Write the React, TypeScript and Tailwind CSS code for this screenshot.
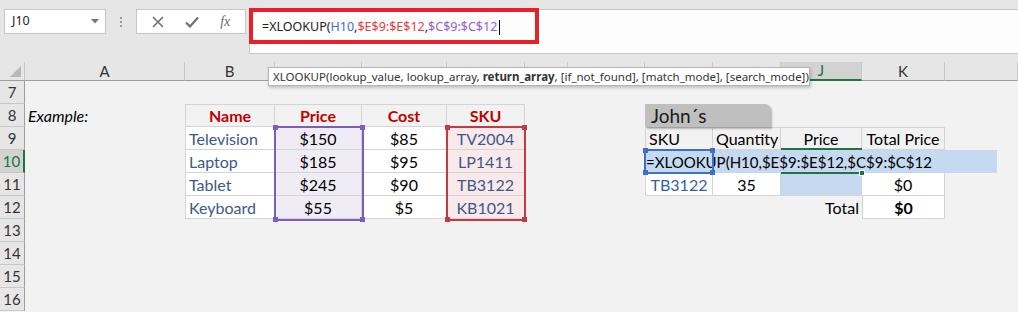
import React from 'react';

const W = [
  'w-[25px]', 'w-[160px]', 'w-[90px]', 'w-[87px]', 'w-[85px]', 'w-[78px]', 'w-[43px]',
  'w-[77px]', 'w-[68px]', 'w-[68px]', 'w-[81px]', 'w-[83px]', 'w-[73px]',
];
// Letters hidden under the tooltip (C..I) and off-screen (L) are not shown in the reference
const LET = ['', 'A', 'B', '', '', '', '', '', '', '', 'J', 'K', ''];

type CellDef = { c?: string; t?: React.ReactNode; raw?: boolean };

function RH({ n, active }: { n: number; active?: boolean }) {
  return (
    <div
      className={`w-[25px] shrink-0 h-[23px] box-border border-b border-b-[#c8c8c8] flex items-center justify-center text-[15px] ${
        active
          ? 'bg-[#d2d2d2] text-[#217346] border-r-2 border-r-[#217346]'
          : 'bg-[#e6e6e6] text-[#333] border-r border-r-[#9e9e9e]'
      }`}
    >
      {n}
    </div>
  );
}

function Row({ n, active, cells = {} }: { n: number; active?: boolean; cells?: Record<number, CellDef> }) {
  const cols = [1, 2, 3, 4, 5, 6, 7, 8, 9, 10, 11, 12];
  return (
    <div className="flex h-[23px]">
      <RH n={n} active={active} />
      {cols.map((i) => {
        const d = cells[i] || {};
        return (
          <div
            key={i}
            className={`${W[i]} relative shrink-0 h-[23px] box-border flex whitespace-nowrap ${
              d.raw ? 'items-start' : 'items-center px-[3px] pt-[1px]'
            } ${d.c || ''}`}
          >
            {d.t}
          </div>
        );
      })}
    </div>
  );
}

const BD = 'border-[#d4d4d4]';
const T = `border-r border-b ${BD}`;
const TL = `border-l border-r border-b ${BD}`;
const TT = `border-t border-r border-b ${BD}`;
const TTL = `border-t border-l border-r border-b ${BD}`;
const HDR = 'justify-center font-bold text-[#c00000]';
const NM = 'text-[#3b5a8a]';
const CT = 'justify-center';
const PUR = 'bg-[#efecf6]';
const PNK = 'bg-[#fae9ea]';

function Handles({ col }: { col: string }) {
  return (
    <>
      <div className={`absolute -left-[3px] -top-[3px] w-[5px] h-[5px] ${col}`} />
      <div className={`absolute -right-[3px] -top-[3px] w-[5px] h-[5px] ${col}`} />
      <div className={`absolute -left-[3px] -bottom-[3px] w-[5px] h-[5px] ${col}`} />
      <div className={`absolute -right-[3px] -bottom-[3px] w-[5px] h-[5px] ${col}`} />
    </>
  );
}

// Range highlight drawn over cells C9:C12 and E9:E12 (overlay anchored in the first cell)
function RangeBox({ w, border, handle }: { w: string; border: string; handle: string }) {
  return (
    <div className={`absolute -left-[1px] -top-[1px] ${w} h-[95px] box-border border-2 z-10 pointer-events-none ${border}`}>
      <Handles col={handle} />
    </div>
  );
}

export default function App() {
  return (
    <div className="relative w-[1018px] h-[312px] overflow-hidden bg-[#f2f2f2] font-['Lato',sans-serif] text-[16px] text-black">
      {/* Top bar */}
      <div className="h-[62px] bg-[#e6e6e6] flex items-start pt-[9px] pl-[4px]">
        <div className="w-[102px] h-[25px] box-border bg-white border border-[#c6c6c6] flex items-center pl-[7px] pr-[6px] font-['Noto_Sans',sans-serif] text-[12.5px] text-[#222]">
          <span className="flex-1">J10</span>
          <svg width="8" height="5" viewBox="0 0 8 5"><path d="M0 0h8L4 4.5z" fill="#777" /></svg>
        </div>
        <div className="w-[30px] h-[25px] flex flex-col items-center justify-center gap-[2px]">
          <div className="w-[2px] h-[2px] bg-[#9a9a9a]" />
          <div className="w-[2px] h-[2px] bg-[#9a9a9a]" />
          <div className="w-[2px] h-[2px] bg-[#9a9a9a]" />
        </div>
        <div className="w-[110px] h-[25px] box-border bg-white border border-[#c6c6c6] flex items-center justify-around px-[4px]">
          <svg width="12" height="12" viewBox="0 0 12 12"><path d="M1 1L11 11M11 1L1 11" stroke="#707070" strokeWidth="1.6" /></svg>
          <svg width="14" height="12" viewBox="0 0 14 12"><path d="M1 6.5L5 10.5L13 1.5" stroke="#707070" strokeWidth="2.2" fill="none" /></svg>
          <span className="font-['Liberation_Serif',serif] italic text-[14px] text-[#6a6a6a] leading-none">fx</span>
        </div>
        <div className="relative flex-1 ml-[3px] h-[45px] box-border bg-[#fdfdfd] border-y border-l border-[#c6c6c6] pl-[12px] pt-[9px] font-['Noto_Sans',sans-serif] text-[12.5px] leading-[16px] text-[#222]">
          <span>=XLOOKUP(</span>
          <span className="text-[#3d6fc6]">H10</span>
          <span>,</span>
          <span className="text-[#e0403f]">$E$9:$E$12</span>
          <span>,</span>
          <span className="text-[#8f62cc]">$C$9:$C$12</span>
          <span className="inline-block w-[1px] h-[15px] bg-black align-middle ml-[2px]" />
          <div className="absolute -left-[1px] -top-[2px] w-[290px] h-[36px] box-border border-4 border-[#e8202a]" />
        </div>
      </div>

      {/* Column header row */}
      <div className="flex h-[19px]">
        <div className="w-[25px] shrink-0 h-[19px] box-border bg-[#e6e6e6] border-r border-r-[#c8c8c8] border-b border-b-[#9e9e9e] flex items-end justify-end pr-[3px] pb-[3px]">
          <svg width="11" height="11" viewBox="0 0 11 11"><path d="M11 0V11H0z" fill="#b8b8b8" /></svg>
        </div>
        {LET.slice(1).map((l, k) => {
          const i = k + 1;
          const act = i === 10;
          return (
            <div
              key={i}
              className={`${W[i]} shrink-0 h-[19px] box-border border-r border-r-[#c8c8c8] flex items-center justify-center text-[15px] ${
                act
                  ? 'bg-[#d2d2d2] text-[#217346] border-b-2 border-b-[#217346]'
                  : 'bg-[#e6e6e6] text-[#333] border-b border-b-[#9e9e9e]'
              }`}
            >
              {l}
            </div>
          );
        })}
      </div>

      {/* Rows */}
      <Row n={7} />
      <Row
        n={8}
        cells={{
          1: { c: 'italic', t: 'Example:' },
          2: { c: `${TTL} ${HDR}`, t: 'Name' },
          3: { c: `${TT} ${HDR}`, t: 'Price' },
          4: { c: `${TT} ${HDR}`, t: 'Cost' },
          5: { c: `${TT} ${HDR}`, t: 'SKU' },
          8: {
            raw: true,
            c: 'z-10',
            t: (
              <div className="shrink-0 w-[125px] h-[23px] bg-[#bfbfbf] rounded-tr-[5px] shadow-[2px_2px_2px_rgba(0,0,0,0.25)] pl-[6px] text-[19px] leading-[24px] text-[#1a1a1a]">
                John´s
              </div>
            ),
          },
        }}
      />
      <Row
        n={9}
        cells={{
          2: { c: `${TL} bg-white ${NM}`, t: 'Television' },
          3: {
            c: `${T} ${PUR} ${CT}`,
            t: (
              <>
                $150
                <RangeBox w="w-[90px]" border="border-[#7d5cbb]" handle="bg-[#7d5cbb]" />
              </>
            ),
          },
          4: { c: `${T} bg-white ${CT}`, t: '$85' },
          5: {
            c: `${T} ${PNK} ${CT} ${NM}`,
            t: (
              <>
                TV2004
                <RangeBox w="w-[80px]" border="border-[#c23a42]" handle="bg-[#c23a42]" />
              </>
            ),
          },
          8: { c: `${TTL}`, t: 'SKU' },
          9: { c: `${TT}`, t: 'Quantity' },
          10: { c: `${TT} ${CT}`, t: 'Price' },
          11: { c: `${TT} ${CT}`, t: 'Total Price' },
        }}
      />
      <Row
        n={10}
        active
        cells={{
          2: { c: `${TL} bg-white ${NM}`, t: 'Laptop' },
          3: { c: `${T} ${PUR} ${CT}`, t: '$185' },
          4: { c: `${T} bg-white ${CT}`, t: '$95' },
          5: { c: `${T} ${PNK} ${CT} ${NM}`, t: 'LP1411' },
          8: {
            raw: true,
            c: 'z-10',
            t: (
              <>
                <div className="shrink-0 w-[352px] h-[23px] bg-[#c5d9f1] pl-[1px] text-[15px] leading-[24px] whitespace-nowrap text-black">
                  =XLOOKUP(H10,$E$9:$E$12,$C$9:$C$12
                </div>
                <div className="absolute -left-[1px] -top-[1px] w-[70px] h-[25px] box-border border-2 border-[#3f6fc6]">
                  <Handles col="bg-[#3f6fc6]" />
                </div>
              </>
            ),
          },
          10: {
            raw: true,
            c: 'z-20',
            t: (
              <div className="absolute inset-x-0 -top-[2px] -bottom-[1px] border-y-2 border-[#217346]">
                <div className="absolute -right-[3px] -bottom-[4px] w-[6px] h-[6px] bg-[#217346] border border-white" />
              </div>
            ),
          },
        }}
      />
      <Row
        n={11}
        cells={{
          2: { c: `${TL} bg-white ${NM}`, t: 'Tablet' },
          3: { c: `${T} ${PUR} ${CT}`, t: '$245' },
          4: { c: `${T} bg-white ${CT}`, t: '$90' },
          5: { c: `${T} ${PNK} ${CT} ${NM}`, t: 'TB3122' },
          8: { c: `${TL} bg-white ${CT} text-[#2f62ad]`, t: 'TB3122' },
          9: { c: `${T} bg-white ${CT}`, t: '35' },
          10: { c: `${T} bg-[#c5d9f1]` },
          11: { c: `${T} bg-white ${CT}`, t: '$0' },
        }}
      />
      <Row
        n={12}
        cells={{
          2: { c: `${TL} bg-white ${NM}`, t: 'Keyboard' },
          3: { c: `${T} ${PUR} ${CT}`, t: '$55' },
          4: { c: `${T} bg-white ${CT}`, t: '$5' },
          5: { c: `${T} ${PNK} ${CT} ${NM}`, t: 'KB1021' },
          10: { c: 'justify-end', t: 'Total' },
          11: { c: `${TL} bg-white ${CT} font-bold`, t: '$0' },
        }}
      />
      <Row n={13} />
      <Row n={14} />
      <Row n={15} />
      <Row n={16} />

      {/* Function tooltip */}
      <div className="absolute left-[268px] top-[67px] z-30 w-[542px] h-[19px] box-border bg-white border border-[#b5b5b5] shadow-[1px_2px_3px_rgba(0,0,0,0.2)] pl-[4px] font-['Noto_Sans',sans-serif] text-[11.5px] leading-[17px] text-[#333] whitespace-nowrap">
        XLOOKUP(lookup_value, lookup_array, <b>return_array</b>, [if_not_found], [match_mode], [search_mode])
      </div>
    </div>
  );
}
